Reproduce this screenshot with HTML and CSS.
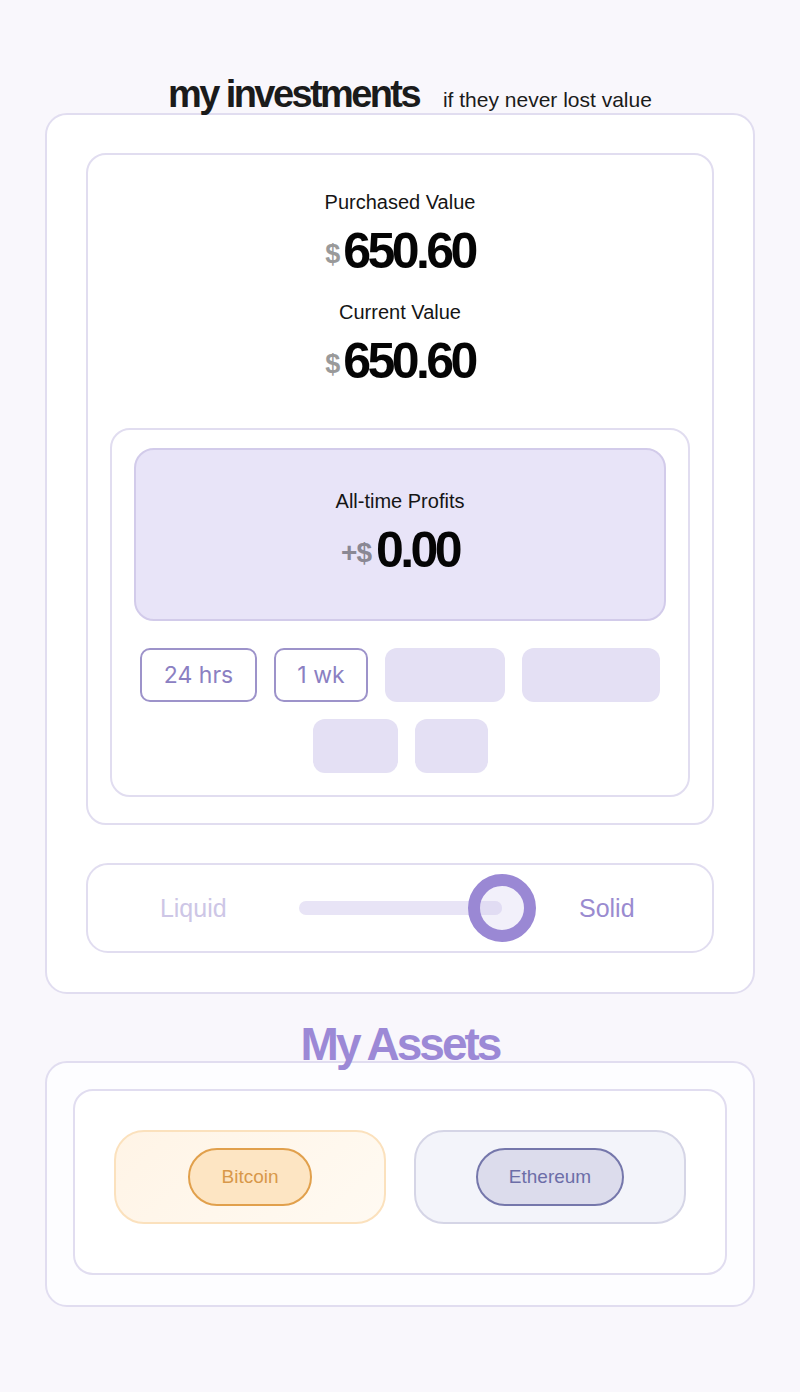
FILE: index.html
```html
<!DOCTYPE html>
<html lang="en">
<head>
<meta charset="utf-8">
<title>my investments</title>
<link rel="stylesheet" href="styles.css">
</head>
<body>
<main class="page">
  <header class="title-row">
    <h1 class="title">my investments</h1>
    <span class="subtitle">if they never lost value</span>
  </header>

  <section class="card outer">
    <div class="card values">
      <div class="label">Purchased Value</div>
      <div class="amount"><span class="cur">$</span>650.60</div>
      <div class="label second">Current Value</div>
      <div class="amount"><span class="cur">$</span>650.60</div>

      <div class="card profits">
        <div class="profit-box">
          <div class="label">All-time Profits</div>
          <div class="amount"><span class="cur plus">+$</span>0.00</div>
        </div>
        <div class="ranges">
          <button class="range">24 hrs</button>
          <button class="range">1 wk</button>
          <span class="skel w120"></span>
          <span class="skel w138"></span>
          <span class="skel w85"></span>
          <span class="skel w73"></span>
        </div>
      </div>
    </div>

    <div class="card toggle">
      <span class="t-label liquid">Liquid</span>
      <div class="track">
        <span class="track-end"></span>
        <span class="thumb"></span>
      </div>
      <span class="t-label solid">Solid</span>
    </div>
  </section>

  <h2 class="assets-title">My Assets</h2>
  <section class="card outer assets">
    <div class="card asset-list">
      <div class="tile btc"><span class="pill">Bitcoin</span></div>
      <div class="tile eth"><span class="pill">Ethereum</span></div>
    </div>
  </section>
</main>
</body>
</html>
```

FILE: styles.css
```css
* { box-sizing: border-box; }

html, body {
  margin: 0;
  padding: 0;
  background: #f9f7fc;
  font-family: "Liberation Sans", Arial, sans-serif;
  color: #111;
}

.page {
  width: 800px;
  padding: 75px 45px 60px;
}

.title-row {
  position: relative;
  z-index: 1;
  display: flex;
  align-items: baseline;
  justify-content: center;
  gap: 24px;
  padding-left: 20px;
  height: 38px;
}

.title {
  margin: 0;
  font-size: 38px;
  line-height: 38px;
  font-weight: 700;
  letter-spacing: -2.6px;
  color: #1b1b1b;
}

.subtitle {
  font-size: 21px;
  line-height: 38px;
  color: #1b1b1b;
}

.card {
  background: #fff;
  border: 2px solid #e1ddf0;
  border-radius: 22px;
}

.outer {
  padding: 38px 39px 39px;
}

.values {
  padding: 35px 22px 26px;
  text-align: center;
  border-radius: 20px;
}

.label {
  font-size: 20px;
  line-height: 24px;
  color: #151515;
}

.label.second { margin-top: 21px; }

.amount {
  margin-top: 9px;
  height: 56px;
  font-size: 50px;
  line-height: 56px;
  font-weight: 700;
  letter-spacing: -3.6px;
  color: #050505;
}

.cur {
  display: inline-block;
  line-height: 1;
  vertical-align: 5px;
  font-size: 27px;
  letter-spacing: 0;
  color: #9a9a9a;
  margin-right: 3px;
}

.cur.plus {
  color: #8a8894;
  font-size: 28px;
  letter-spacing: -1px;
  margin-right: 5px;
}

.profits {
  margin-top: 39px;
  padding: 18px 22px 22px;
  border-radius: 20px;
}

.profit-box {
  background: #e8e4f8;
  border: 2px solid #d2cbea;
  border-radius: 20px;
  padding: 39px 0 41px;
}

.ranges {
  margin-top: 27px;
  display: flex;
  flex-wrap: wrap;
  justify-content: center;
  gap: 17px;
}

.range {
  height: 54px;
  padding: 0;
  background: #fff;
  border: 2px solid #9d93ca;
  border-radius: 10px;
  font-family: Inter, "Liberation Sans", sans-serif;
  font-size: 23px;
  font-weight: 400;
  color: #8b80c2;
  cursor: pointer;
}

.range:nth-child(1) { width: 117px; }
.range:nth-child(2) { width: 94px; }

.skel {
  height: 54px;
  background: #e4e0f4;
  border-radius: 12px;
}

.w120 { width: 120px; }
.w138 { width: 138px; }
.w85 { width: 85px; }
.w73 { width: 73px; }

.toggle {
  margin-top: 38px;
  height: 90px;
  display: grid;
  grid-template-columns: 1fr 203px 1fr;
  align-items: center;
}

.t-label {
  text-align: center;
  font-size: 25px;
}

.liquid { color: #cdc6e6; }
.solid { color: #9a8bd0; }

.track {
  position: relative;
  height: 14px;
  border-radius: 7px;
  background: #e8e4f6;
}

.track-end {
  position: absolute;
  right: 0;
  top: 0;
  width: 32px;
  height: 14px;
  border-radius: 7px;
  background: #d9d2f0;
}

.thumb {
  position: absolute;
  right: -34px;
  top: 50%;
  width: 68px;
  height: 68px;
  margin-top: -34px;
  border-radius: 50%;
  border: 12px solid #9a88d4;
  background: rgba(232, 228, 246, 0.55);
}

.assets-title {
  position: relative;
  z-index: 1;
  margin: 27px 0 -6px;
  text-align: center;
  font-size: 46px;
  line-height: 46px;
  font-weight: 700;
  letter-spacing: -3px;
  color: #9c89d6;
}

.assets {
  padding: 26px 26px 30px;
  background: #fdfdff;
}

.asset-list {
  display: flex;
  gap: 28px;
  padding: 39px 39px 49px;
  border-radius: 20px;
}

.tile {
  width: 272px;
  height: 94px;
  border-radius: 30px;
  border: 2px solid;
  display: flex;
  align-items: center;
  justify-content: center;
}

.pill {
  height: 58px;
  padding: 0 31px;
  border-radius: 29px;
  border: 2px solid;
  display: flex;
  align-items: center;
  font-size: 19px;
}

.btc {
  background: linear-gradient(135deg, #fff4e6, #fffaf2);
  border-color: #fbe1bd;
}

.btc .pill {
  background: #fde5c3;
  border-color: #e1a04c;
  color: #d8984a;
}

.eth {
  background: #f3f4fa;
  border-color: #d5d5e6;
}

.eth .pill {
  background: #dcdcec;
  border-color: #7577ab;
  color: #6c6ea8;
}
```
